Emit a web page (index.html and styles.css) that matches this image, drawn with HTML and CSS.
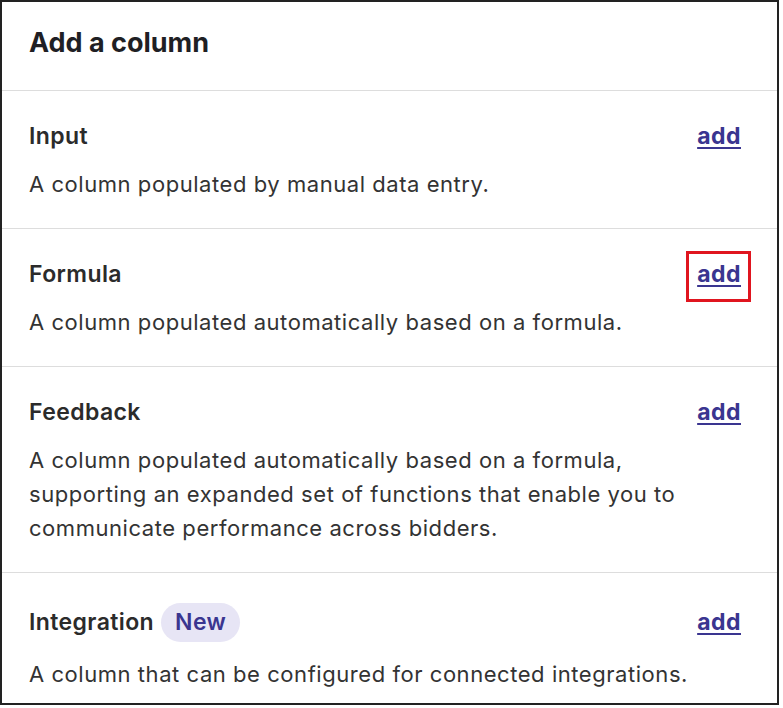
FILE: index.html
```html
<!DOCTYPE html>
<html>
<head>
<meta charset="utf-8">
<link rel="stylesheet" href="styles.css">
</head>
<body>
<div class="panel">
  <div class="header"><h1 class="title">Add a column</h1></div>
  <div class="section">
    <div class="row"><span class="name">Input</span><a class="add" href="#">add</a></div>
    <p class="desc">A column populated by manual data entry.</p>
  </div>
  <div class="section">
    <div class="row"><span class="name">Formula</span><a class="add highlighted" href="#">add</a></div>
    <p class="desc">A column populated automatically based on a formula.</p>
  </div>
  <div class="section">
    <div class="row"><span class="name">Feedback</span><a class="add" href="#">add</a></div>
    <p class="desc">A column populated automatically based on a formula,<br>supporting an expanded set of functions that enable you to<br>communicate performance across bidders.</p>
  </div>
  <div class="section">
    <div class="row"><span class="name">Integration <span class="badge">New</span></span><a class="add" href="#">add</a></div>
    <p class="desc">A column that can be configured for connected integrations.</p>
  </div>
</div>
</body>
</html>
```
FILE: styles.css
```css
html, body { margin: 0; padding: 0; background: #fff; }
body { font-family: Inter, "Noto Sans", sans-serif; color: #2b2b2b; }
.panel {
  width: 775px;
  height: 701px;
  border: 2px solid #222;
  overflow: hidden;
  background: #fff;
}
.header {
  height: 89px;
  border-bottom: 1px solid #ddd;
  box-sizing: border-box;
  display: flex;
  align-items: center;
  padding: 0 0 8px 27px;
}
.title { margin: 0; font-size: 27px; font-weight: 700; color: #1f1f24; }
.section {
  border-bottom: 1px solid #ddd;
  padding: 31px 36px 27px 27px;
}
.row {
  display: flex;
  justify-content: space-between;
  align-items: center;
  min-height: 28px;
}
.name { font-size: 23px; font-weight: 600; color: #2b2b2b; letter-spacing: 0.4px; display: flex; align-items: center; gap: 7px; }
.badge {
  background: #e7e5f5;
  color: #3a3590;
  font-weight: 600;
  border-radius: 20px;
  padding: 0 14px;
  height: 39px;
  line-height: 39px;
  margin: -1.5px 0;
  display: inline-block;
}
.add {
  font-size: 23px;
  font-weight: 700;
  color: #3a3590;
  letter-spacing: 0.5px;
  line-height: 28px;
  display: inline-block;
  text-decoration: underline;
  text-underline-offset: 3px;
  position: relative;
}
.highlighted::after {
  content: "";
  position: absolute;
  left: -11px; top: -9px; right: -10px; bottom: -14px;
  border: 3px solid #e0151f;
}
.desc { margin: 17px 0 0; font-size: 22px; line-height: 34px; letter-spacing: 0.55px; color: #333; }
```
